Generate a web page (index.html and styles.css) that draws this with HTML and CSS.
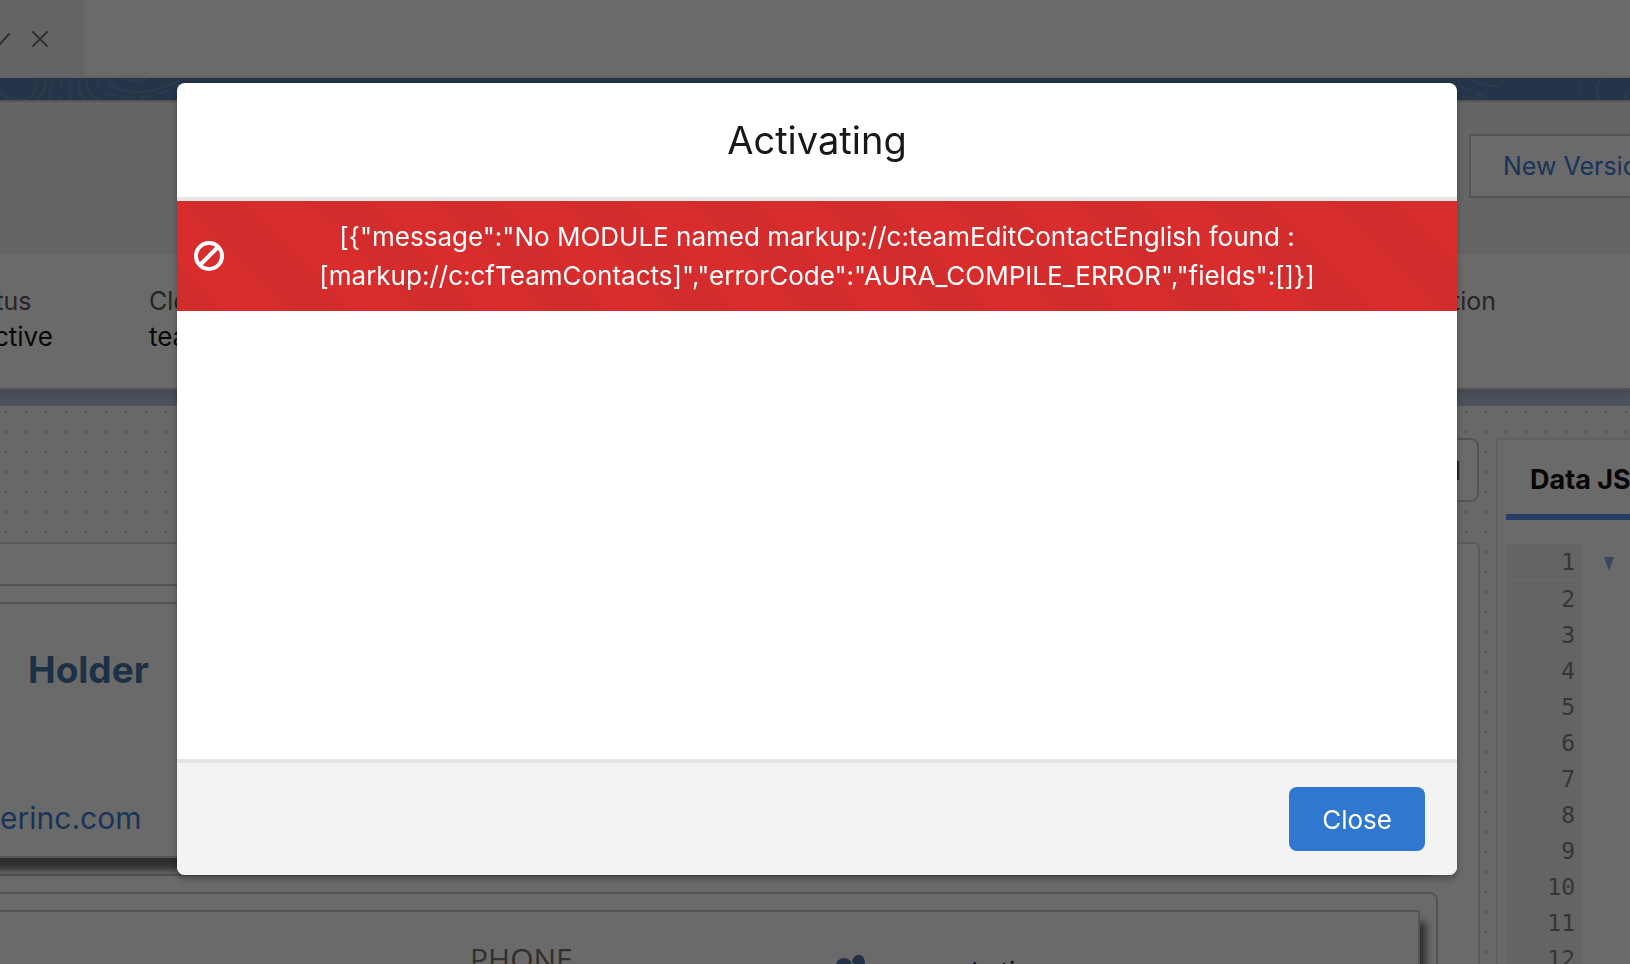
FILE: index.html
```html
<!DOCTYPE html>
<html lang="en">
<head>
  <meta charset="utf-8">
  <title>Activating</title>
  <link rel="stylesheet" href="styles.css">
</head>
<body>

  <!-- Page behind the modal -->
  <div class="page">
    <div class="tab-bar">
      <div class="tab">
        <button class="icon-btn" aria-label="Tab actions">
          <svg width="20" height="20" viewBox="0 0 20 20"><path d="M1 5l9 10 9-10"/></svg>
        </button>
        <button class="icon-btn" aria-label="Close tab">
          <svg width="20" height="20" viewBox="0 0 20 20"><path d="M3 3l14 14M17 3L3 17"/></svg>
        </button>
      </div>
    </div>

    <div class="band">
      <svg width="180" height="22" viewBox="0 0 180 22">
        <path d="M35 0c3 11-2 22-17 22S-1 12-2 8M44 0c3 9-1 17-7 22M54 0c-4 8-5 15-4 22M71 0c-2 9-1 16 1 22M80 0c-2 9 0 17 5 22M88 0c-3 10 2 18 12 22M108 0c2 9 12 14 30 14 16 0 28-6 42-12M122 0c6 3 18 3 26 0"/>
        <path class="dash" d="M63 0c-3 8-4 15-3 22M97 0c-2 14 14 20 38 20 18 0 32-7 45-13"/>
      </svg>
      <svg width="180" height="22" viewBox="0 0 180 22">
        <path d="M18 0c10 6 22 9 30 8 5-1 7-4 6-8M7 17l22 5M153 0c-8 6-8 16-3 22M180 10c-4 3-5 8-4 12"/>
        <path class="dash" d="M10 8l32 14M129 5v17"/>
      </svg>
    </div>

    <div class="page-header">
      <button class="new-version">New Version</button>
    </div>

    <div class="fields">
      <div class="field"><span class="label">Status</span><span>Inactive</span></div>
      <div class="field"><span class="label">Cloned From</span><span>team</span></div>
      <div class="field field-last"><span class="label">Description</span></div>
    </div>

    <div class="canvas">
      <div class="stage">
        <div class="toolbar"><button class="view-btn">Full</button></div>
        <div class="preview">
          <div class="state">
            <div class="card contact">
              <h2>Holder</h2>
              <a href="#">erinc.com</a>
            </div>
          </div>
          <div class="state">
            <div class="card details">
              <span class="phone">PHONE</span>
              <svg width="32" height="32" viewBox="0 0 32 32"><circle cx="8" cy="12" r="8"/><path d="M16 8c1-9 13-11 13 2 0 8-4 14-9 18 3-8 3-15-4-20z"/></svg>
              <span class="marketing">marketing</span>
            </div>
          </div>
        </div>
      </div>

      <div class="json">
        <div class="json-tab">Data JSON</div>
        <div class="editor">
          <ol class="gutter">
            <li>1</li><li>2</li><li>3</li><li>4</li><li>5</li><li>6</li>
            <li>7</li><li>8</li><li>9</li><li>10</li><li>11</li><li>12</li>
          </ol>
          <svg class="fold" width="10" height="14" viewBox="0 0 10 14"><path d="M0 0h10L5 14z"/></svg>
        </div>
      </div>
    </div>
  </div>

  <!-- Modal -->
  <div class="backdrop">
    <section class="modal" role="dialog" aria-labelledby="modalTitle">
      <header class="modal-header"><h1 id="modalTitle">Activating</h1></header>
      <div class="alert" role="alert">
        <svg width="32" height="32" viewBox="0 0 32 32"><circle cx="16" cy="16" r="13"/><path d="M7 25L25 7"/></svg>
        <p>[{"message":"No MODULE named markup://c:teamEditContactEnglish found :<br>[markup://c:cfTeamContacts]","errorCode":"AURA_COMPILE_ERROR","fields":[]}]</p>
      </div>
      <div class="modal-body"></div>
      <footer class="modal-footer"><button class="close-btn">Close</button></footer>
    </section>
  </div>

</body>
</html>
```
FILE: styles.css
```css
* {
  box-sizing: border-box;
}

body {
  margin: 0;
  height: 100vh;
  overflow: hidden;
  font-family: Inter, "Liberation Sans", sans-serif;
  font-size: 26px;
  color: #080707;
}

button {
  font: inherit;
  cursor: pointer;
}

h1,
h2,
p,
ol {
  margin: 0;
  padding: 0;
}

.page {
  height: 100vh;
  display: flex;
  flex-direction: column;
  overflow: hidden;
  background: #fff;
}

/* Tabs */
.tab-bar {
  flex: none;
  height: 78px;
  border-bottom: 2px solid #e8e8e8;
}

.tab {
  width: 84px;
  height: 76px;
  display: flex;
  align-items: center;
  justify-content: flex-end;
  gap: 20px;
  padding: 2px 34px 0 0;
  background: #edf1f6;
}

.icon-btn {
  display: flex;
  padding: 0;
  border: 0;
  background: none;
}

.icon-btn path {
  fill: none;
  stroke: #706e6b;
  stroke-width: 2;
  stroke-linecap: round;
}

.band {
  flex: none;
  height: 24px;
  display: flex;
  justify-content: space-between;
  background: #4e7bb0;
  border-bottom: 2px solid #c9c7c5;
}

.band path {
  fill: none;
  stroke: #6888b0;
  stroke-width: 2;
}

.band .dash {
  stroke-dasharray: 10 8;
}

/* Header */
.page-header {
  flex: none;
  height: 152px;
  display: flex;
  justify-content: flex-end;
  padding-top: 32px;
  background: #f3f2f2;
}

.new-version {
  width: 208px;
  height: 64px;
  margin-right: -47px;
  padding: 0 32px;
  text-align: left;
  white-space: nowrap;
  font-size: 25px;
  color: #3578d5;
  background: #fff;
  border: 2px solid #c9c7c5;
}

.fields {
  flex: none;
  position: relative;
  height: 136px;
  display: flex;
  gap: 96px;
  margin-left: -43px;
  padding: 30px 134px 0 0;
  border-bottom: 2px solid #c9c7c5;
  box-shadow: 0 4px 8px rgba(0, 0, 0, 0.15);
  line-height: 35px;
}

.field {
  display: flex;
  flex-direction: column;
}

.field-last {
  margin-left: auto;
}

.label {
  font-size: 25px;
  color: #54524f;
}

/* Card designer */
.canvas {
  flex: 1;
  min-height: 0;
  display: flex;
  gap: 16px;
  border-top: 16px solid #b0c4df;
  background-image: linear-gradient(#fafaf9 18px, transparent 18px), linear-gradient(90deg, #fafaf9 18px, #c0c0c0 18px);
  background-size: 20px 20px;
  background-position: 7px 7px;
}

.stage {
  flex: 1;
  min-width: 0;
  padding-top: 32px;
}

.toolbar {
  display: flex;
  justify-content: flex-end;
  margin: 0 1px 40px 0;
}

.view-btn {
  height: 64px;
  padding: 0 16px;
  color: #54524f;
  background: #fff;
  border: 2px solid #c9c7c5;
  border-radius: 8px;
}

.preview {
  padding: 40px 40px 0 0;
  background: #fff;
  border: 2px solid #d8d6d4;
  border-left: 0;
  border-radius: 0 6px 0 0;
}

.state {
  margin-bottom: 16px;
  padding: 16px 16px 16px 0;
  border: 2px solid #c9c7c5;
  border-left: 0;
  border-radius: 0 8px 8px 0;
}

.card {
  margin-left: -32px;
  padding-left: 32px;
  border: 2px solid #c9c7c5;
  box-shadow: 6px 12px 8px rgba(0, 0, 0, 0.6);
}

.contact {
  height: 256px;
  padding-top: 38px;
}

.contact h2 {
  margin-left: 26px;
  font-size: 37px;
  line-height: 56px;
  color: #3a6fa5;
}

.contact a {
  display: block;
  margin: 100px 0 0 -2px;
  font-size: 30px;
  line-height: 40px;
  color: #3578d5;
  text-decoration: none;
}

.details {
  height: 256px;
  display: flex;
  padding: 26px 0 0 500px;
}

.phone {
  width: 366px;
  font-family: "Open Sans", sans-serif;
  font-size: 30px;
  color: #706e6b;
}

.details svg {
  margin: 16px 56px 0 0;
  fill: #4a70a0;
}

.marketing {
  margin-top: 18px;
  color: #1b2a66;
}

/* JSON panel */
.json {
  width: 134px;
  margin-top: 32px;
  padding-left: 8px;
  overflow: hidden;
  background: #fff;
  border: 2px solid #e5e5e5;
  border-width: 2px 0 0 2px;
}

.json-tab {
  height: 80px;
  padding-left: 24px;
  line-height: 80px;
  font-weight: 700;
  font-size: 27px;
  white-space: nowrap;
  border-bottom: 6px solid #5594f2;
}

.editor {
  display: flex;
  align-items: flex-start;
  gap: 22px;
  margin-top: 24px;
}

.gutter {
  width: 76px;
  padding-right: 7px;
  list-style: none;
  text-align: right;
  font-family: "DejaVu Sans Mono", monospace;
  font-size: 23px;
  line-height: 36px;
  color: #7b7b7b;
  background: #f0f0f0;
}

.gutter li:first-child {
  margin-right: -7px;
  padding-right: 7px;
  border-bottom: 1px solid #fff;
}

.fold {
  margin-top: 13px;
  fill: #84a9d8;
}

/* Modal */
.backdrop {
  position: fixed;
  inset: 0;
  padding: 83px 173px 89px 177px;
  background: rgba(8, 7, 7, 0.6);
}

.modal {
  height: 100%;
  display: flex;
  flex-direction: column;
  overflow: hidden;
  background: #fff;
  border-radius: 8px;
  box-shadow: 0 4px 6px rgba(0, 0, 0, 0.3);
}

.modal-header {
  padding: 32px;
  border-bottom: 4px solid #e4e5e5;
  text-align: center;
}

.modal-header h1 {
  font-size: 38px;
  font-weight: 400;
  line-height: 50px;
  color: #181818;
}

.alert {
  display: flex;
  align-items: center;
  padding: 16px;
  color: #fff;
  background: #d92d2d linear-gradient(45deg, rgba(0, 0, 0, 0.03) 25%, transparent 25%, transparent 50%, rgba(0, 0, 0, 0.03) 50%, rgba(0, 0, 0, 0.03) 75%, transparent 75%) 0 0 / 128px 128px;
}

.alert svg {
  flex: none;
  fill: none;
  stroke: #fff;
  stroke-width: 4;
}

.alert p {
  flex: 1;
  padding-right: 32px;
  text-align: center;
  line-height: 39px;
}

.modal-body {
  flex: 1;
}

.modal-footer {
  display: flex;
  justify-content: flex-end;
  padding: 24px 32px;
  background: #f3f3f3;
  border-top: 4px solid #e4e4e4;
}

.close-btn {
  height: 64px;
  padding: 0 33px;
  color: #fff;
  background: #2f77cf;
  border: 0;
  border-radius: 8px;
}
```
